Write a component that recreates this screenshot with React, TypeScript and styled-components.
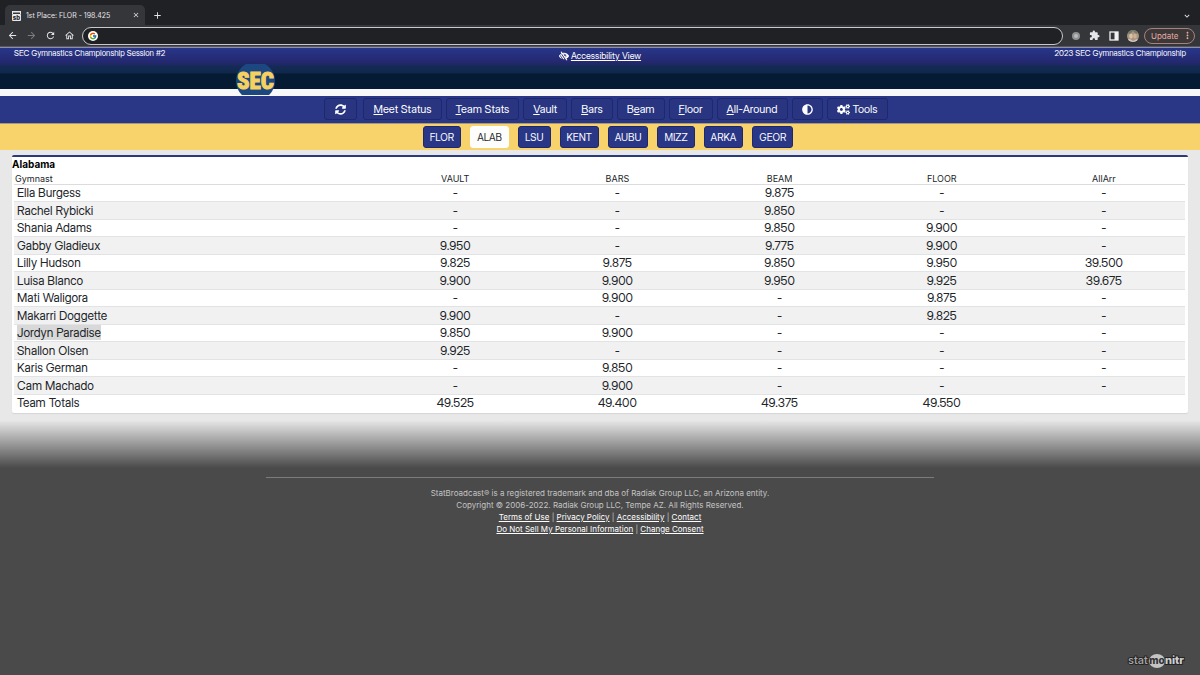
import React from "react";
import styled, { createGlobalStyle, css } from "styled-components";
import { FaAdjust, FaCogs, FaLowVision, FaSyncAlt } from "react-icons/fa";
import {
  MdArrowBack,
  MdArrowForward,
  MdClose,
  MdExtension,
  MdKeyboardArrowDown,
  MdMoreVert,
  MdAdd,
  MdOutlineHome,
  MdRefresh,
} from "react-icons/md";
import { FcGoogle } from "react-icons/fc";

const displayFont = `"Inter Display", Inter, "Liberation Sans", sans-serif`;

const GlobalStyle = createGlobalStyle`
  *, *::before, *::after { box-sizing: border-box; }
  html { background: #4a4a4a; }
  body {
    margin: 0;
    font-family: Inter, "Liberation Sans", sans-serif;
    color: #212529;
  }
  button, input { font: inherit; }
  a { color: inherit; }
`;

const Page = styled.div`
  display: flex;
  flex-direction: column;
  min-height: 100vh;
  background: #4a4a4a;
`;

/* ---------- Browser window ---------- */

const TabStrip = styled.div`
  display: flex;
  align-items: flex-end;
  height: 25px;
  padding: 0 8px 0 5px;
  background: #202124;
`;

const Tab = styled.div`
  display: flex;
  align-items: center;
  width: 140px;
  height: 20px;
  padding: 0 5px 0 6px;
  border-radius: 5px 5px 0 0;
  background: #35363a;
  color: #e4e5e8;
  font-size: 7px;
`;

const TabTitle = styled.span`
  flex: 1;
  margin-left: 4px;
  white-space: nowrap;
`;

const IconButton = styled.button<{ $size?: number; $dim?: boolean }>`
  display: flex;
  align-items: center;
  justify-content: center;
  width: ${({ $size }) => $size ?? 12}px;
  height: ${({ $size }) => $size ?? 12}px;
  padding: 0;
  border: 0;
  background: none;
  color: ${({ $dim }) => ($dim ? "#7c7d80" : "#e4e5e8")};
  font-size: ${({ $size }) => $size ?? 12}px;
`;

const NewTab = styled(IconButton)`
  margin: 0 auto 4px 7px;
`;

const TabSearch = styled(IconButton)`
  margin-bottom: 4px;
`;

const Toolbar = styled.div`
  display: flex;
  align-items: center;
  gap: 7px;
  height: 22px;
  padding: 0 5px 0 6px;
  border-bottom: 1px solid #55565f;
  background: #35363a;
`;

const AddressBar = styled.label`
  display: flex;
  flex: 1;
  align-items: center;
  gap: 6px;
  height: 18px;
  padding: 0 5px;
  border: 1px solid #c8c9cc;
  border-radius: 9px;
  background: #202124;
  font-size: 8px;
`;

const GoogleDisc = styled.span`
  display: flex;
  padding: 1px;
  border-radius: 50%;
  background: #fff;
  font-size: 8px;
`;

const AddressInput = styled.input`
  flex: 1;
  min-width: 0;
  padding: 0;
  border: 0;
  outline: 0;
  background: none;
  color: #e4e5e8;
`;

const ToolbarEnd = styled.div`
  display: flex;
  align-items: center;
  gap: 5px;
`;

const Extras = styled.div`
  display: flex;
  align-items: center;
  gap: 8px;
`;

const UpdateButton = styled.button`
  display: flex;
  align-items: center;
  justify-content: space-between;
  width: 51px;
  height: 16px;
  padding: 0 1px 0 6px;
  border: 1px solid #a8827f;
  border-radius: 8px;
  background: #3c3838;
  color: #e4aaa5;
  font-size: 8px;
`;

/* ---------- Site header ---------- */

const HeaderArea = styled.div`
  position: relative;
`;

const Header = styled.header`
  display: grid;
  grid-template-columns: 1fr auto 1fr;
  align-items: start;
  height: 49px;
  padding: 0 14px;
  border-top: 1px solid #8d8fa6;
  border-bottom: 7px solid #f8f8fa;
  background: linear-gradient(#28368a 0, #25286f 14px, #142a55 19px, #0f2849 25px, #051a33 26px, #051a33 100%);
  color: #fff;
  font-family: ${displayFont};
  font-size: 8px;
  line-height: 10px;
`;

const HeaderText = styled.span<{ $right?: boolean }>`
  text-align: ${({ $right }) => ($right ? "right" : "left")};
`;

const AccessLink = styled.a`
  display: flex;
  align-items: center;
  gap: 2px;
  padding-top: 2px;
  font-size: 9px;
  line-height: 12px;
`;

const LogoLayer = styled.div`
  position: absolute;
  left: 235px;
  top: 17px;
  z-index: 1;
`;

/* ---------- Navigation ---------- */

const Nav = styled.nav`
  display: flex;
  align-items: flex-start;
  justify-content: center;
  gap: 4px;
  height: 27px;
  padding: 2px 0 0 12px;
  background: #2a3786;
`;

const NavButton = styled.button<{ $wide?: boolean }>`
  display: flex;
  align-items: center;
  justify-content: center;
  gap: 3px;
  height: 22px;
  margin-right: ${({ $wide }) => ($wide ? 2 : 0)}px;
  padding: 0 ${({ $wide }) => ($wide ? 10 : 9)}px;
  border: 1px solid #1d286d;
  border-radius: 3px;
  background: #293580;
  color: #fff;
  font-family: ${displayFont};
  font-size: 11px;
  line-height: 14px;
  white-space: nowrap;
`;

const TeamBar = styled.nav`
  display: flex;
  align-items: center;
  justify-content: center;
  gap: 9px;
  height: 27px;
  padding-left: 16px;
  border-top: 1px solid #a99a77;
  background: #f8d36b;
`;

const TeamButton = styled.button<{ $active?: boolean }>`
  height: 22px;
  padding: 0 6px;
  border: 1px solid #1d286d;
  border-radius: 3px;
  background: #2a3786;
  color: #fff;
  font-family: ${displayFont};
  font-size: 10px;
  line-height: 12px;
  ${({ $active }) =>
    $active &&
    css`
      border-color: #fff;
      background: #fdfdfb;
      color: #212529;
    `}
`;

/* ---------- Score table ---------- */

const Main = styled.main`
  padding: 5px 12px 7px;
  background: #e8e8e8;
`;

const Card = styled.section`
  padding: 0 3px 2px 2px;
  border-top: 2px solid #2a3a7c;
  border-radius: 2px;
  background: #fff;
  box-shadow: 0 1px 1px #d4d4d4;
`;

const TeamName = styled.h1`
  margin: 0 -2px;
  color: #000;
  font-size: 10px;
  font-weight: 700;
  line-height: 14px;
`;

const Scores = styled.table`
  width: 100%;
  border-collapse: collapse;
  table-layout: fixed;
  font-family: ${displayFont};
  font-size: 12px;
  line-height: 14px;
`;

const HeadCell = styled.th<{ $name?: boolean }>`
  width: ${({ $name }) => ($name ? "auto" : "13.85%")};
  height: 13px;
  padding: 0 0 0 ${({ $name }) => ($name ? 1 : 0)}px;
  border-bottom: 1px solid #dcdcdf;
  font-family: Inter, "Liberation Sans", sans-serif;
  font-size: 9px;
  font-weight: 400;
  line-height: 10px;
  text-align: ${({ $name }) => ($name ? "left" : "center")};
  vertical-align: bottom;
`;

const Row = styled.tr`
  height: 17px;
  border-bottom: 1px solid #e2e3e5;
  &:nth-child(even) {
    height: 18px;
    background: #f1f1f1;
  }
  &:last-child {
    border-bottom: 0;
  }
`;

const NameCell = styled.td`
  padding: 1px 0 0 3px;
`;

const ScoreCell = styled.td`
  padding: 1px 0 0;
  text-align: center;
`;

const Selected = styled.span`
  background: #d8d8d8;
`;

/* ---------- Footer ---------- */

const Footer = styled.footer`
  position: relative;
  display: flex;
  flex: 1;
  flex-direction: column;
  align-items: center;
  background: linear-gradient(#e8e8e8 0, #4a4a4a 48px);
  color: #c4c4c4;
  font-size: 8px;
  line-height: 12px;
  text-align: center;
`;

const Rule = styled.hr`
  width: 55.7%;
  margin: 57px 0 9px;
  border: 0;
  border-top: 1px solid #7c7c7c;
`;

const FooterLine = styled.p`
  margin: 0;
`;

const FooterLink = styled.a`
  color: #fff;
`;

const MonitrMark = styled.div`
  position: absolute;
  right: 14px;
  bottom: 5px;
  display: flex;
`;

/* ---------- Drawings ---------- */

const FaviconMark = () => (
  <svg width="11" height="11" viewBox="0 0 11 11" aria-hidden="true">
    <path d="M1 1h9v3H9V2.500H2V4H1z" fill="#e9e9ea" />
    <rect x="1" y="4" width="9" height="7" rx="1" fill="#e9e9ea" />
    <text x="5.500" y="9.500" fontSize="6" fontWeight="800" textAnchor="middle" fill="#26272a">
      sb
    </text>
  </svg>
);

const SecLogo = () => (
  <svg width="41" height="31" viewBox="0 0 41 31" role="img" aria-label="SEC">
    <circle cx="20.500" cy="17" r="19.500" fill="#1c4780" />
    <text
      x="20.500"
      y="25"
      fontFamily="'Roboto Condensed', Roboto, sans-serif"
      fontSize="23"
      fontWeight="800"
      textAnchor="middle"
      fill="#f7d160"
      stroke="#f7d160"
      strokeWidth="1"
    >
      SEC
    </text>
  </svg>
);

const MonitrLogo = () => (
  <svg width="60" height="18" viewBox="0 0 60 18" role="img" aria-label="statmonitr">
    <ellipse cx="31" cy="9" rx="8" ry="7" fill="#c4c4c4" />
    <g fontSize="11" stroke="#262626" strokeWidth="2" paintOrder="stroke">
      <text x="2" y="12" fontWeight="500" fill="#a9a9a9">stat</text>
      <text x="39" y="12" fontWeight="800" fill="#cfcfcf">nitr</text>
    </g>
    <text x="31" y="12" fontSize="10" fontWeight="800" textAnchor="middle" fill="#333">mo</text>
  </svg>
);

const ProfilePhoto = () => (
  <svg width="12" height="12" viewBox="0 0 12 12" aria-hidden="true">
    <defs>
      <clipPath id="photo">
        <circle cx="6" cy="6" r="6" />
      </clipPath>
    </defs>
    <g clipPath="url(#photo)">
      <rect width="12" height="12" fill="#a8957f" />
      <path d="M0 0h12v2L9 4 6 1 3 4 0 3z" fill="#6f7a69" />
      <ellipse cx="4" cy="6" rx="1.800" ry="2.500" fill="#dcc0a8" />
      <ellipse cx="8" cy="6" rx="1.800" ry="2.500" fill="#cfae94" />
      <path d="M0 9l3 0 3 2 4-2 2 1v3H0z" fill="#cfc6bd" />
    </g>
  </svg>
);

const SidePanelIcon = () => (
  <svg width="10" height="10" viewBox="0 0 10 10" aria-hidden="true">
    <rect x="1" y="1" width="8" height="8" fill="none" stroke="#f1f1f2" strokeWidth="1.300" />
    <rect x="5.500" y="1" width="3.500" height="8" fill="#f1f1f2" />
  </svg>
);

const RecordIcon = () => (
  <svg width="10" height="10" viewBox="0 0 10 10" aria-hidden="true">
    <circle cx="5" cy="5" r="4" fill="#8f9092" />
    <circle cx="5" cy="5" r="2" fill="#b9babb" />
  </svg>
);

/* ---------- Data ---------- */

const navItems: [string, string, string][] = [
  ["", "M", "eet Status"],
  ["", "T", "eam Stats"],
  ["", "V", "ault"],
  ["", "B", "ars"],
  ["B", "e", "am"],
  ["", "F", "loor"],
  ["", "A", "ll-Around"],
];

const teams = ["FLOR", "ALAB", "LSU", "KENT", "AUBU", "MIZZ", "ARKA", "GEOR"];

const columns = ["VAULT", "BARS", "BEAM", "FLOOR", "AllArr"];

const scores: [string, ...string[]][] = [
  ["Ella Burgess", "-", "-", "9.875", "-", "-"],
  ["Rachel Rybicki", "-", "-", "9.850", "-", "-"],
  ["Shania Adams", "-", "-", "9.850", "9.900", "-"],
  ["Gabby Gladieux", "9.950", "-", "9.775", "9.900", "-"],
  ["Lilly Hudson", "9.825", "9.875", "9.850", "9.950", "39.500"],
  ["Luisa Blanco", "9.900", "9.900", "9.950", "9.925", "39.675"],
  ["Mati Waligora", "-", "9.900", "-", "9.875", "-"],
  ["Makarri Doggette", "9.900", "-", "-", "9.825", "-"],
  ["Jordyn Paradise", "9.850", "9.900", "-", "-", "-"],
  ["Shallon Olsen", "9.925", "-", "-", "-", "-"],
  ["Karis German", "-", "9.850", "-", "-", "-"],
  ["Cam Machado", "-", "9.900", "-", "-", "-"],
  ["Team Totals", "49.525", "49.400", "49.375", "49.550", ""],
];

const selectedGymnast = "Jordyn Paradise";

export default function App() {
  return (
    <Page>
      <GlobalStyle />
      <TabStrip>
        <Tab>
          <FaviconMark />
          <TabTitle>1st Place: FLOR - 198.425</TabTitle>
          <IconButton $size={8} aria-label="Close tab"><MdClose /></IconButton>
        </Tab>
        <NewTab $size={11} aria-label="New tab"><MdAdd /></NewTab>
        <TabSearch $size={10} aria-label="Search tabs"><MdKeyboardArrowDown /></TabSearch>
      </TabStrip>
      <Toolbar>
        <IconButton aria-label="Back"><MdArrowBack size={11} /></IconButton>
        <IconButton aria-label="Forward" $dim><MdArrowForward size={11} /></IconButton>
        <IconButton aria-label="Reload"><MdRefresh size={11} /></IconButton>
        <IconButton aria-label="Home"><MdOutlineHome size={11} /></IconButton>
        <AddressBar>
          <GoogleDisc><FcGoogle /></GoogleDisc>
          <AddressInput type="text" aria-label="Address" />
        </AddressBar>
        <ToolbarEnd>
          <Extras>
            <IconButton $size={11} aria-label="Recorder"><RecordIcon /></IconButton>
            <IconButton $size={11} aria-label="Extensions"><MdExtension /></IconButton>
            <IconButton $size={11} aria-label="Side panel"><SidePanelIcon /></IconButton>
            <IconButton aria-label="Profile"><ProfilePhoto /></IconButton>
          </Extras>
          <UpdateButton>
            Update
            <MdMoreVert size={11} />
          </UpdateButton>
        </ToolbarEnd>
      </Toolbar>

      <HeaderArea>
        <Header>
          <HeaderText>SEC Gymnastics Championship Session #2</HeaderText>
          <AccessLink href="#accessibility"><FaLowVision size={10} /> Accessibility View</AccessLink>
          <HeaderText $right>2023 SEC Gymnastics Championship</HeaderText>
        </Header>
        <LogoLayer><SecLogo /></LogoLayer>
      </HeaderArea>

      <Nav aria-label="Statistics">
        <NavButton $wide aria-label="Refresh"><FaSyncAlt size={11} /></NavButton>
        {navItems.map(([before, key, after]) => (
          <NavButton key={before + key + after}>
            <span>{before}<u>{key}</u>{after}</span>
          </NavButton>
        ))}
        <NavButton aria-label="Contrast"><FaAdjust size={11} /></NavButton>
        <NavButton><FaCogs size={13} /> Tools</NavButton>
      </Nav>
      <TeamBar aria-label="Teams">
        {teams.map((team) => (
          <TeamButton key={team} $active={team === "ALAB"}>{team}</TeamButton>
        ))}
      </TeamBar>

      <Main>
        <Card>
          <TeamName>Alabama</TeamName>
          <Scores>
            <thead>
              <tr>
                <HeadCell $name scope="col">Gymnast</HeadCell>
                {columns.map((column) => (
                  <HeadCell key={column} scope="col">{column}</HeadCell>
                ))}
              </tr>
            </thead>
            <tbody>
              {scores.map(([name, ...values]) => (
                <Row key={name}>
                  <NameCell>{name === selectedGymnast ? <Selected>{name}</Selected> : name}</NameCell>
                  {values.map((value, index) => (
                    <ScoreCell key={columns[index]}>{value}</ScoreCell>
                  ))}
                </Row>
              ))}
            </tbody>
          </Scores>
        </Card>
      </Main>

      <Footer>
        <Rule />
        <FooterLine>StatBroadcast® is a registered trademark and dba of Radiak Group LLC, an Arizona entity.</FooterLine>
        <FooterLine>Copyright © 2006-2022. Radiak Group LLC, Tempe AZ. All Rights Reserved.</FooterLine>
        <FooterLine>
          <FooterLink href="#terms">Terms of Use</FooterLink> | <FooterLink href="#privacy">Privacy Policy</FooterLink> |{" "}
          <FooterLink href="#accessibility">Accessibility</FooterLink> | <FooterLink href="#contact">Contact</FooterLink>
        </FooterLine>
        <FooterLine>
          <FooterLink href="#personal-information">Do Not Sell My Personal Information</FooterLink> |{" "}
          <FooterLink href="#consent">Change Consent</FooterLink>
        </FooterLine>
        <MonitrMark><MonitrLogo /></MonitrMark>
      </Footer>
    </Page>
  );
}
